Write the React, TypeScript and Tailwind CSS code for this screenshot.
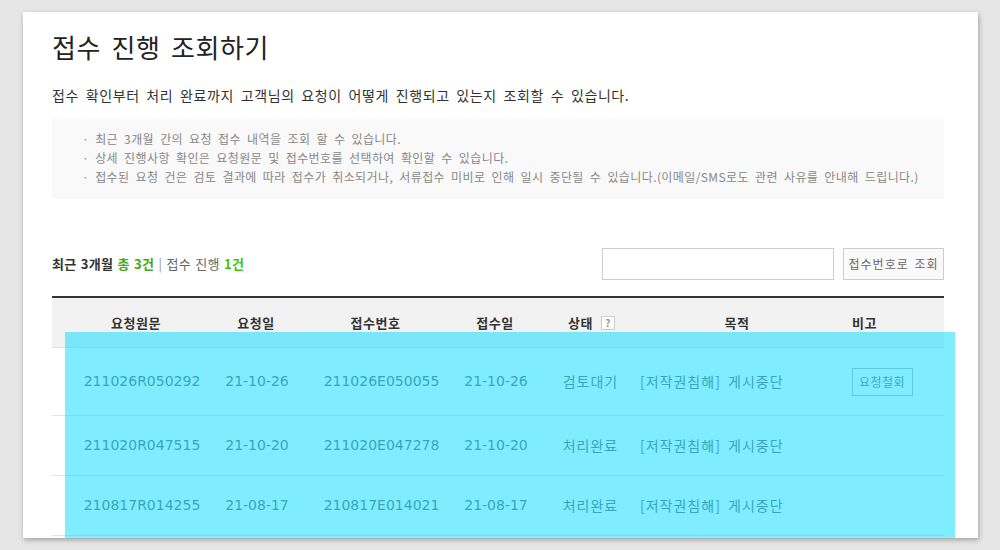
import React from 'react';

type Row = {
  reqNo: string;
  reqDate: string;
  recNo: string;
  recDate: string;
  status: string;
  purpose: string;
  cancellable?: boolean;
};

const rows: Row[] = [
  { reqNo: '211026R050292', reqDate: '21-10-26', recNo: '211026E050055', recDate: '21-10-26', status: '검토대기', purpose: '[저작권침해] 게시중단', cancellable: true },
  { reqNo: '211020R047515', reqDate: '21-10-20', recNo: '211020E047278', recDate: '21-10-20', status: '처리완료', purpose: '[저작권침해] 게시중단' },
  { reqNo: '210817R014255', reqDate: '21-08-17', recNo: '210817E014021', recDate: '21-08-17', status: '처리완료', purpose: '[저작권침해] 게시중단' },
];

const notices = [
  '최근 3개월 간의 요청 접수 내역을 조회 할 수 있습니다.',
  '상세 진행사항 확인은 요청원문 및 접수번호를 선택하여 확인할 수 있습니다.',
  '접수된 요청 건은 검토 결과에 따라 접수가 취소되거나, 서류접수 미비로 인해 일시 중단될 수 있습니다.(이메일/SMS로도 관련 사유를 안내해 드립니다.)',
];

// column widths add up to the 892px table
const cols = 'grid grid-cols-[160px_96px_143px_96px_83px_190px_124px]';

const App: React.FC = () => {
  return (
    <div className="min-h-screen bg-[#e6e6e6] pt-[12px] font-['Noto_Sans_CJK_KR',sans-serif]">
      <div className="relative ml-[23px] h-[526px] w-[955px] overflow-hidden bg-white pl-[29px] pr-[34px] pt-[19px] shadow-[1px_2px_5px_rgba(0,0,0,0.3)]">
        <h1 className="text-[26px] leading-[32px] tracking-[0.6px] text-[#222] [word-spacing:4px]">접수 진행 조회하기</h1>
        <p className="mt-[22px] text-[14px] leading-[20px] tracking-[0.6px] text-[#333] [word-spacing:3px]">
          접수 확인부터 처리 완료까지 고객님의 요청이 어떻게 진행되고 있는지 조회할 수 있습니다.
        </p>

        {/* Notice box */}
        <ul className="mt-[14px] bg-[#f9f9f9] pb-[13px] pl-[30px] pt-[10px] text-[12px] leading-[19px] tracking-[0.4px] text-[#888] [word-spacing:3px]">
          {notices.map((n) => (
            <li key={n} className="flex gap-[6px]">
              <span>·</span>
              <span>{n}</span>
            </li>
          ))}
        </ul>

        {/* Summary + search */}
        <div className="mt-[49px] flex items-center justify-between">
          <p className="text-[13px] tracking-[0.3px] text-[#666] [word-spacing:1px]">
            <span className="font-bold text-[#333]">최근 3개월</span>{' '}
            <span className="font-bold text-[#44a812]">총 3건</span>{' '}
            <span className="text-[#999]">|</span> 접수 진행{' '}
            <span className="font-bold text-[#3cc80a]">1건</span>
          </p>
          <div className="flex gap-[9px]">
            <input className="h-[32px] w-[232px] border border-[#ccc] bg-white px-2 text-[13px] outline-none" />
            <button className="h-[32px] w-[101px] border border-[#ccc] bg-[#fafafa] text-[12px] tracking-[1px] text-[#666] [word-spacing:2px]">
              접수번호로 조회
            </button>
          </div>
        </div>

        {/* Table */}
        <div className="mt-4 border-t-2 border-[#333]">
          <div className={`${cols} h-[50px] items-center border-b border-[#e0e0e0] bg-[#f2f2f2] text-center text-[13px] font-bold tracking-[0.5px] text-[#333]`}>
            <div className="pl-[8px]">요청원문</div>
            <div className="pr-[8px]">요청일</div>
            <div className="pr-[8px]">접수번호</div>
            <div className="pr-[8px]">접수일</div>
            <div className="flex items-center justify-center gap-[8px] pl-[6px]">
              <span>상태</span>
              <span className="flex h-[14px] w-[14px] items-center justify-center border border-[#ccc] bg-white text-[10px] leading-none text-[#999]">?</span>
            </div>
            <div className="pl-[24px]">목적</div>
            <div className="pr-[35px]">비고</div>
          </div>
          {rows.map((r) => (
            <div
              key={r.reqNo}
              className={`${cols} ${r.cancellable ? 'h-[68px]' : 'h-[60px]'} items-center border-b border-[#e5e5e5] text-center font-['DejaVu_Sans','Noto_Sans_CJK_KR',sans-serif] text-[14px] text-[#707070]`}
            >
              <div className="pl-[20px]">{r.reqNo}</div>
              <div className="pr-[6px]">{r.reqDate}</div>
              <div className="pl-[4px]">{r.recNo}</div>
              <div className="pr-[6px]">{r.recDate}</div>
              <div className="pl-[4px] font-['Noto_Sans_CJK_KR',sans-serif] tracking-[1px]">{r.status}</div>
              <div className="pl-[10px] text-left font-['Noto_Sans_CJK_KR',sans-serif] tracking-[1px] [word-spacing:3px]">{r.purpose}</div>
              <div className="flex justify-center">
                {r.cancellable && (
                  <button className="h-[28px] w-[61px] border border-[#bbb] font-['Noto_Sans_CJK_KR',sans-serif] text-[12px] tracking-[0.5px] text-[#777]">
                    요청철회
                  </button>
                )}
              </div>
            </div>
          ))}
        </div>

        {/* highlight overlay */}
        <div className="pointer-events-none absolute bottom-0 left-[42px] top-[320px] w-[890px] bg-[rgba(0,220,255,0.5)]" />
      </div>
    </div>
  );
};

export default App;
